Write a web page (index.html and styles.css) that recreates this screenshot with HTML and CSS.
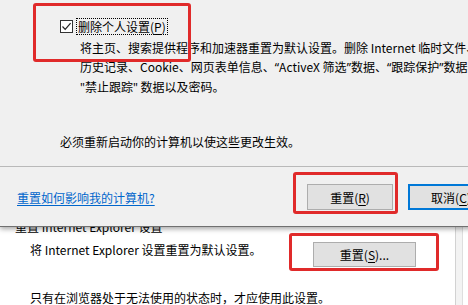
FILE: index.html
```html
<!DOCTYPE html>
<html lang="zh-CN">
<head>
    <meta charset="UTF-8">
    <meta name="viewport" content="width=device-width, initial-scale=1.0">
    <title>重置 Internet Explorer 设置</title>
    <link rel="stylesheet" href="styles.css">
</head>
<body>
    <div class="window">
        <div class="window-content">
            <div class="section-title">重置 Internet Explorer 设置</div>
            <div class="reset-row">
                <div class="reset-text">将 Internet Explorer 设置重置为默认设置。</div>
                <button class="win-btn reset-open">重置(<u>S</u>)...</button>
            </div>
            <div class="reset-note">只有在浏览器处于无法使用的状态时，才应使用此设置。</div>
        </div>
        <div class="scroll-edge"></div>
    </div>

    <div class="dialog">
        <div class="dialog-body">
            <div class="option">
                <span class="checkbox">
                    <svg width="11" height="11" viewBox="0 0 11 11">
                        <path d="M1.5 5.5 L4.2 8.3 L9.6 2.2" fill="none" stroke="#222" stroke-width="1.2"/>
                    </svg>
                </span>
                <span class="option-label">删除个人设置(<u>P</u>)</span>
            </div>
            <div class="option-desc">
                将主页、搜索提供程序和加速器重置为默认设置。删除 Internet 临时文件、<br>
                历史记录、Cookie、网页表单信息、<span class="q">“</span>ActiveX 筛选<span class="q">”</span>数据、<span class="q">“</span>跟踪保护<span class="q">”</span>数据、<br>
                <span class="q">"</span>禁止跟踪<span class="q">"</span> 数据以及密码。
            </div>
            <div class="restart-note">必须重新启动你的计算机以使这些更改生效。</div>
        </div>
        <div class="dialog-footer">
            <a class="help-link" href="#">重置如何影响我的计算机?</a>
            <div class="footer-buttons">
                <button class="win-btn">重置(<u>R</u>)</button>
                <button class="win-btn default">取消(<u>C</u>)</button>
            </div>
        </div>
    </div>

    <div class="mark mark-option"></div>
    <div class="mark mark-confirm"></div>
    <div class="mark mark-open"></div>
</body>
</html>
```

FILE: styles.css
```css
body {
    margin: 0;
    width: 468px;
    height: 305px;
    overflow: hidden;
    position: relative;
    background: #fff;
    font-family: "Noto Sans CJK SC", "Noto Sans", sans-serif;
    font-size: 12px;
    line-height: 19px;
    color: #000;
}
u {
    text-decoration: underline;
    text-underline-offset: 2px;
}
.q {
    font-family: "Noto Sans", sans-serif;
}
.win-btn {
    font-family: inherit;
    font-size: 12px;
    color: #000;
    background: #e1e1e1;
    border: 1px solid #adadad;
    padding: 0;
    box-sizing: border-box;
}

/* window behind the dialog */
.window {
    display: flex;
    height: 305px;
}
.window-content {
    flex: 1;
    padding: 217px 0 0 15px;
}
.scroll-edge {
    width: 6px;
    margin-right: 5px;
    background: #f3f3f3;
    border-left: 1px solid #d2d2d2;
    border-right: 1px solid #dedede;
}
.reset-row {
    display: flex;
    align-items: flex-start;
    margin-top: 4px;
    padding-left: 15px;
}
.reset-text {
    width: 283px;
}
.reset-open {
    width: 103px;
    height: 25px;
    margin-top: 2px;
}
.reset-note {
    margin-top: 21px;
    padding-left: 15px;
}

/* dialog */
.dialog {
    position: absolute;
    top: 0;
    left: 0;
    width: 520px;
    height: 226px;
    background: #f0f0f0;
    border-bottom: 1px solid #707070;
    box-shadow: 0 2px 5px rgba(0,0,0,0.35);
}
.dialog-body {
    height: 167px;
    padding-left: 60px;
    box-sizing: border-box;
    border-bottom: 1px solid #b9b9b9;
}
.option {
    display: flex;
    align-items: center;
    padding-top: 18px;
    height: 17px;
}
.checkbox {
    width: 13px;
    height: 13px;
    box-sizing: border-box;
    border: 1px solid #333;
    background: #fff;
    display: flex;
    align-items: center;
    justify-content: center;
    margin-right: 3px;
}
.option-label {
    border: 1px dotted #000;
    line-height: 15px;
    padding: 0 1px;
}
.option-desc {
    padding-left: 20px;
    margin-top: 3px;
    white-space: nowrap;
}
.restart-note {
    margin-top: 35px;
}
.dialog-footer {
    display: flex;
    align-items: center;
    justify-content: space-between;
    padding: 17px 26px 0 17px;
}
.help-link {
    color: #0066cc;
    text-decoration: underline;
    text-underline-offset: 2px;
}
.footer-buttons {
    display: flex;
    gap: 15px;
}
.footer-buttons .win-btn {
    width: 86px;
    height: 26px;
}
.win-btn.default {
    border: 2px solid #0078d7;
}

/* red annotation boxes */
.mark {
    position: absolute;
    border: 3px solid #e02a2a;
    border-radius: 3px;
    box-sizing: border-box;
}
.mark-option {
    left: 33px;
    top: 3px;
    width: 158px;
    height: 59px;
}
.mark-confirm {
    left: 293px;
    top: 172px;
    width: 105px;
    height: 42px;
}
.mark-open {
    left: 289px;
    top: 233px;
    width: 150px;
    height: 38px;
}
```
